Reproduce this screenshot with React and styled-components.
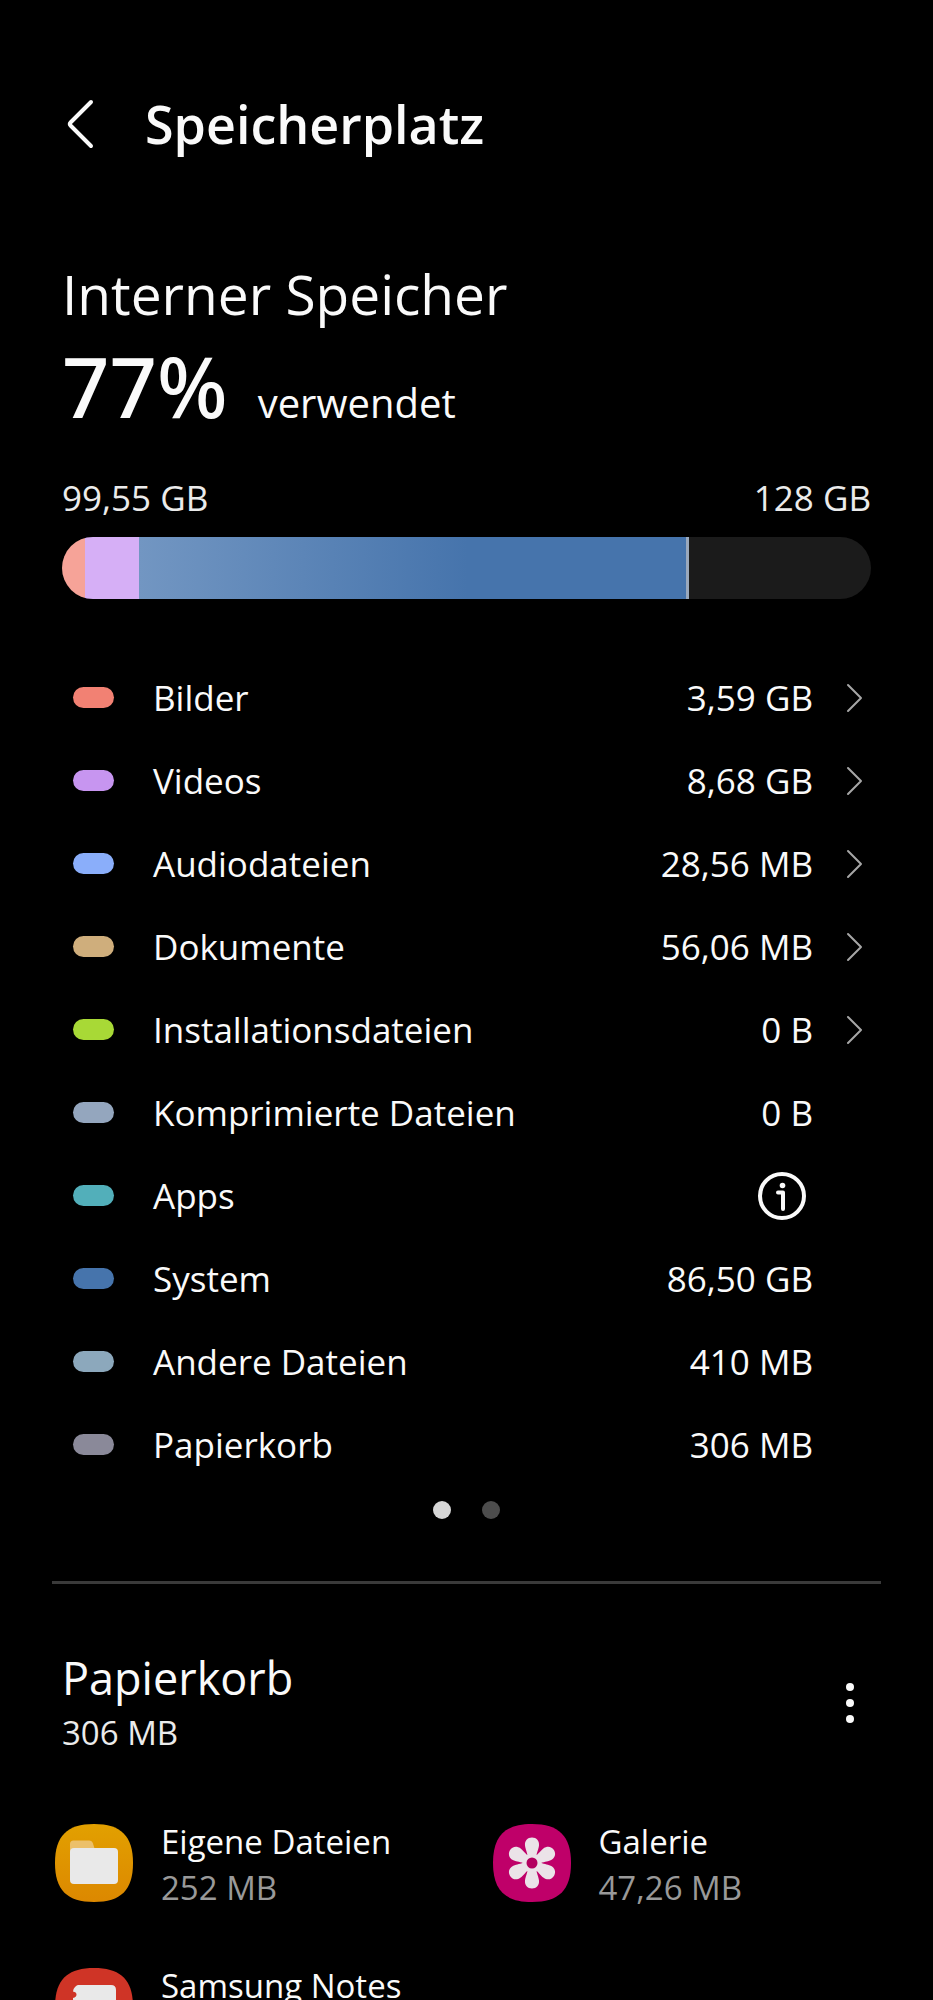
import React from 'react';
import styled, { createGlobalStyle } from 'styled-components';


const GlobalStyle = createGlobalStyle`
    * {
        box-sizing: border-box;
    }

    body {
        margin: 0;
        background: #000;
        color: #fafafa;
        font-family: "Open Sans", "Noto Sans", sans-serif;
    }

    button {
        padding: 0;
        border: 0;
        background: none;
        color: inherit;
        font: inherit;
        cursor: pointer;
    }

    h1, h2, p, ul {
        margin: 0;
        padding: 0;
        list-style: none;
    }
`

const Screen = styled.div`
    display: flex;
    flex-direction: column;
    height: 100vh;
    padding-top: 84px;
    overflow-y: auto;
    scrollbar-width: none;
`

const Header = styled.header`
    display: flex;
    align-items: center;
    flex-shrink: 0;
    gap: 25px;
    height: 80px;
    padding: 0 40px;
`

const BackButton = styled.button`
    display: flex;
    align-items: center;
    justify-content: center;
    width: 80px;
    height: 80px;
`

const Title = styled.h1`
    font-size: 52px;
    font-weight: 600;
    line-height: 80px;
`

const Overview = styled.section`
    padding: 94px 62px 0;
`

const StorageName = styled.h2`
    font-size: 55px;
    font-weight: 400;
    line-height: 72px;
`

const Usage = styled.p`
    display: flex;
    align-items: baseline;
    gap: 30px;
    margin-top: 8px;
    line-height: 96px;
`

const Percent = styled.span`
    font-family: "Noto Sans", sans-serif;
    font-size: 83px;
    font-weight: 500;
`

const UsedText = styled.span`
    font-size: 40px;
    line-height: 48px;
`

const Limits = styled.div`
    display: flex;
    justify-content: space-between;
    margin-top: 40px;
    color: #ebebeb;
    font-size: 35px;
    line-height: 48px;
`

const Bar = styled.div`
    display: flex;
    height: 62px;
    margin-top: 15px;
    border-radius: 31px;
    background: #1b1b1b;
    overflow: hidden;
`

const Segment = styled.div`
    flex: 0 0 ${({share}) => share}%;
    background: ${({fill}) => fill};
`

const Categories = styled.ul`
    margin-top: 57px;
    padding: 0 62px;
`

const Row = styled.li`
    display: flex;
    align-items: center;
    height: 83px;
    padding-left: 11px;
    font-size: 35px;
    line-height: 48px;
`

const Pill = styled.span`
    width: 41px;
    height: 21px;
    margin-right: 39px;
    border-radius: 11px;
    background: ${({color}) => color};
`

const Name = styled.span`
    flex: 1;
`

const RowButton = styled.button`
    display: flex;
    align-items: center;
    justify-content: flex-end;
    width: 58px;
    height: 83px;
    padding-right: 8px;
`

const NoButton = styled.span`
    width: 58px;
`

const InfoButton = styled.button`
    display: flex;
    margin-right: 6px;
`

const Pages = styled.div`
    display: flex;
    justify-content: center;
    gap: 31px;
    margin-top: 15px;
`

const PageDot = styled.button`
    width: 18px;
    height: 18px;
    border-radius: 50%;
    background: ${({$active}) => $active ? '#d6d6d6' : '#4d4d4d'};
`

const Divider = styled.hr`
    flex-shrink: 0;
    width: calc(100% - 104px);
    height: 3px;
    margin: 62px 52px 0;
    border: 0;
    background: #3a3a3a;
`

const TrashHeader = styled.div`
    display: flex;
    align-items: center;
    justify-content: space-between;
    margin-top: 64px;
    padding: 0 62px;
`

const TrashTitle = styled.h2`
    font-size: 45px;
    font-weight: 400;
    line-height: 60px;
`

const TrashSize = styled.p`
    color: #ebebeb;
    font-size: 33px;
    line-height: 50px;
`

const MenuButton = styled.button`
    display: flex;
    align-items: center;
    justify-content: center;
    width: 42px;
    height: 60px;
`

const Apps = styled.ul`
    display: grid;
    grid-template-columns: 1fr 1fr;
    row-gap: 48px;
    margin-top: 57px;
    padding: 0 3px 48px 55px;
`

const AppItem = styled.li`
    display: flex;
    align-items: center;
    gap: 28px;
    font-size: 33px;
    line-height: 46px;
`

const AppText = styled.div`
    padding-top: 4px;
`

const AppSize = styled.p`
    color: #999;
`

const categories = [
    { name: 'Bilder', size: '3,59 GB', color: '#f28173', open: true },
    { name: 'Videos', size: '8,68 GB', color: '#c795f0', open: true },
    { name: 'Audiodateien', size: '28,56 MB', color: '#8aaefa', open: true },
    { name: 'Dokumente', size: '56,06 MB', color: '#cfae7c', open: true },
    { name: 'Installationsdateien', size: '0 B', color: '#a8d936', open: true },
    { name: 'Komprimierte Dateien', size: '0 B', color: '#94a6be' },
    { name: 'Apps', color: '#52afba' },
    { name: 'System', size: '86,50 GB', color: '#4674ac' },
    { name: 'Andere Dateien', size: '410 MB', color: '#8ca8bc' },
    { name: 'Papierkorb', size: '306 MB', color: '#8a8999' },
]

const segments = [
    { share: 2.9, fill: '#f6a398' },
    { share: 6.6, fill: '#d6aff6' },
    { share: 67.6, fill: 'linear-gradient(90deg, #7296c2, #4674ac 60%)' },
    { share: 0.4, fill: '#9aa9bd' },
]

const BackIcon = () => (
    <svg width="28" height="50" viewBox="0 0 28 50" fill="none" stroke="#fafafa" strokeWidth="4" strokeLinecap="round" strokeLinejoin="round">
        <path d="M25 3L4.500 23.500Q3 25 4.500 26.500L25 47" />
    </svg>
)

const ChevronIcon = () => (
    <svg width="18" height="30" viewBox="0 0 18 30" fill="none" stroke="#a6a6a6" strokeWidth="2" strokeLinecap="round" strokeLinejoin="round">
        <path d="M3 2L16 15L3 28" />
    </svg>
)

const InfoIcon = () => (
    <svg width="50" height="50" viewBox="0 0 50 50" fill="none" stroke="#fafafa" strokeWidth="4" strokeLinecap="round" strokeLinejoin="round">
        <circle cx="25" cy="25" r="22" />
        <path d="M21 21.500H26V38" />
        <circle cx="25.500" cy="14.500" r="2.800" fill="#fafafa" stroke="none" />
    </svg>
)

const MoreIcon = () => (
    <svg width="8" height="42" viewBox="0 0 8 42" fill="#fafafa">
        <circle cx="4" cy="5" r="4" />
        <circle cx="4" cy="21" r="4" />
        <circle cx="4" cy="37" r="4" />
    </svg>
)

const squircle = 'M39 0C66 0 78 12 78 39S66 78 39 78S0 66 0 39S12 0 39 0Z'

const FilesIcon = () => (
    <svg width="78" height="78" viewBox="0 0 78 78">
        <defs>
            <linearGradient id="files" x2="0" y2="1">
                <stop offset="0" stopColor="#e2a000" />
                <stop offset="1" stopColor="#dc8800" />
            </linearGradient>
        </defs>
        <path d={squircle} fill="url(#files)" />
        <path d="M15 32V20Q15 16.500 18.500 16.500H34Q37 16.500 38 19.500L40 26Z" fill="#ecc06a" />
        <rect x="15" y="24" width="48" height="36" rx="4" fill="#e9e9e9" />
    </svg>
)

const GalleryIcon = () => (
    <svg width="78" height="78" viewBox="0 0 78 78">
        <path d={squircle} fill="#bf0069" />
        <g fill="#ebe3e8">
            {[0, 60, 120, 180, 240, 300].map(angle => (
                <path
                    key={angle}
                    d="M39 13.500C43.500 13.500 46.500 17 46 21.500C45.500 25.500 43.800 28 43 34L39 39L35 34C34.200 28 32.500 25.500 32 21.500C31.500 17 34.500 13.500 39 13.500Z"
                    transform={`rotate(${angle} 39 39)`}
                />
            ))}
            <circle cx="39" cy="39" r="9.500" />
        </g>
        <circle cx="39" cy="39" r="5.500" fill="#b3005f" />
    </svg>
)

const NotesIcon = () => (
    <svg width="78" height="78" viewBox="0 0 78 78">
        <path d={squircle} fill="#cf3426" />
        <path d="M23 17H56Q61 17 61 22V57Q61 61 57 61H22Q18 61 18 57V52Q22 51 22 48T18 44V40Q22 39 22 36T18 32V30Q21.500 29 21.500 26.500T18 23.500Q18 21 20 19T23 17Z" fill="#e9e9e9" />
    </svg>
)

const apps = [
    { name: 'Eigene Dateien', size: '252 MB', Icon: FilesIcon },
    { name: 'Galerie', size: '47,26 MB', Icon: GalleryIcon },
    { name: 'Samsung Notes', size: '6,91 MB', Icon: NotesIcon },
]

const Category = ({name, size, color, open}) => {
    return (
        <Row>
            <Pill color={color} />
            <Name>{name}</Name>
            {size ? <span>{size}</span> : <InfoButton aria-label="Info"><InfoIcon /></InfoButton>}
            {open ? <RowButton aria-label={name}><ChevronIcon /></RowButton> : <NoButton />}
        </Row>
    )
}

const App = () => {
    return (
        <Screen>
            <GlobalStyle />
            <Header>
                <BackButton aria-label="Zurück"><BackIcon /></BackButton>
                <Title>Speicherplatz</Title>
            </Header>

            <Overview>
                <StorageName>Interner Speicher</StorageName>
                <Usage>
                    <Percent>77%</Percent>
                    <UsedText>verwendet</UsedText>
                </Usage>
                <Limits>
                    <span>99,55 GB</span>
                    <span>128 GB</span>
                </Limits>
                <Bar>
                    {segments.map(s => <Segment key={s.fill} share={s.share} fill={s.fill} />)}
                </Bar>
            </Overview>

            <Categories>
                {categories.map(c => <Category key={c.name} {...c} />)}
            </Categories>

            <Pages>
                <PageDot $active aria-label="Seite 1" />
                <PageDot aria-label="Seite 2" />
            </Pages>

            <Divider />

            <TrashHeader>
                <div>
                    <TrashTitle>Papierkorb</TrashTitle>
                    <TrashSize>306 MB</TrashSize>
                </div>
                <MenuButton aria-label="Weitere Optionen"><MoreIcon /></MenuButton>
            </TrashHeader>

            <Apps>
                {apps.map(({name, size, Icon}) => (
                    <AppItem key={name}>
                        <Icon />
                        <AppText>
                            <p>{name}</p>
                            <AppSize>{size}</AppSize>
                        </AppText>
                    </AppItem>
                ))}
            </Apps>
        </Screen>
    )
}

export default App
